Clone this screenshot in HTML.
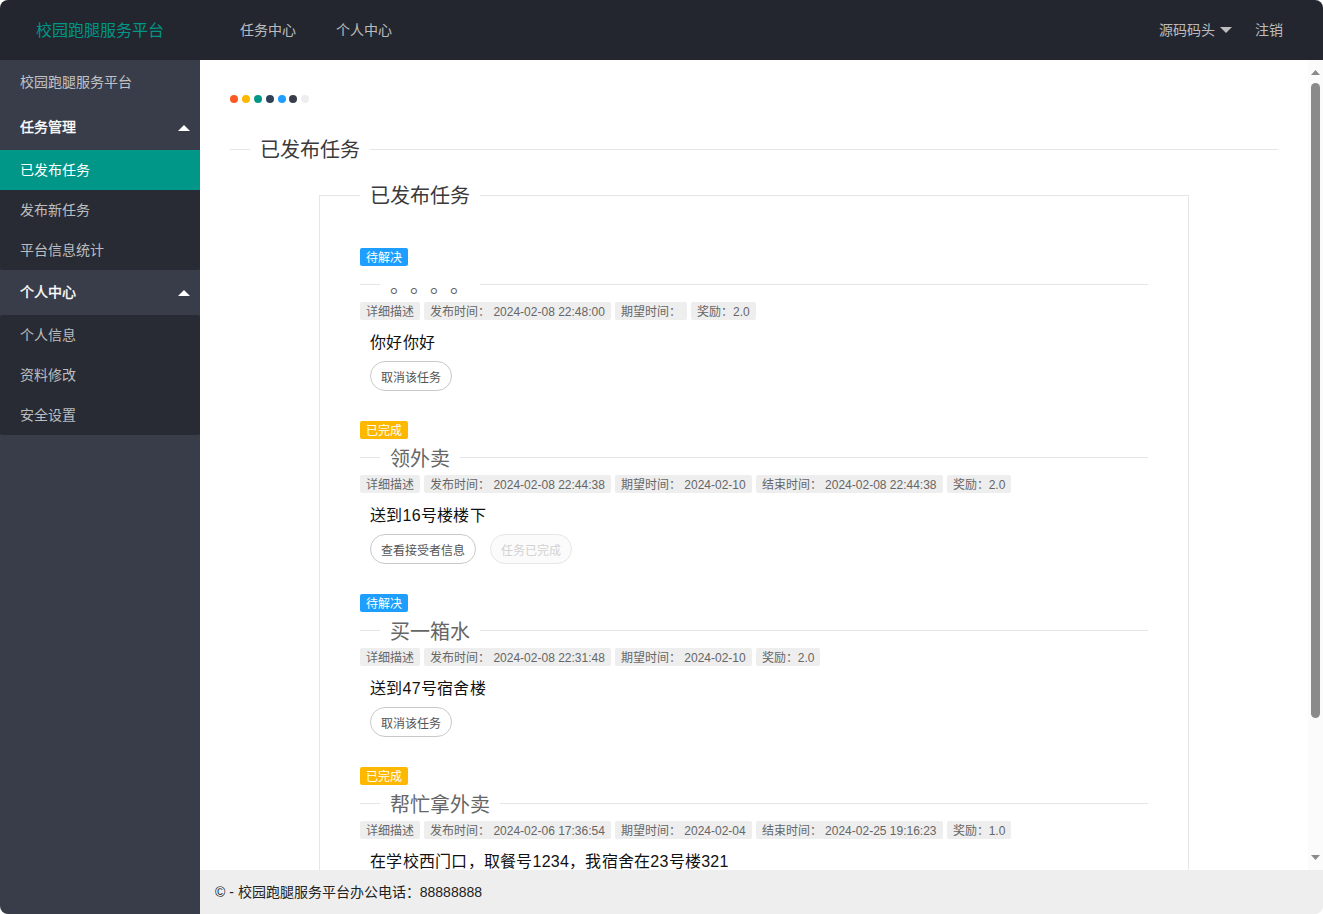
<!DOCTYPE html>
<html lang="zh-CN">
<head>
<meta charset="utf-8">
<title>校园跑腿服务平台</title>
<style>
*{margin:0;padding:0;box-sizing:border-box}
html,body{width:1323px;height:914px;overflow:hidden;background:#fff}
body{text-spacing-trim:space-all;font-family:"Liberation Sans",sans-serif;font-size:14px;color:#333;line-height:24px}
#win{position:absolute;left:0;top:0;width:1323px;height:914px;border-radius:8px;overflow:hidden;background:#fff}
.hdr{position:absolute;left:0;top:0;width:1323px;height:60px;background:#23262E}
.logo{position:absolute;left:0;top:1px;width:200px;height:60px;line-height:60px;text-align:center;color:#009688;font-size:16px}
.hnav{position:absolute;top:0;height:60px;line-height:60px;color:rgba(255,255,255,.7);font-size:14px;white-space:nowrap}
.hnav span{position:absolute;top:0}
.tri-d{position:absolute;width:0;height:0;border-style:solid;border-width:6px 6px 0 6px;border-color:rgba(255,255,255,.7) transparent transparent transparent}
.tri-u{position:absolute;width:0;height:0;border-style:solid;border-width:0 6px 6px 6px;border-color:transparent transparent #fff transparent}
.side{position:absolute;left:0;top:60px;width:200px;height:854px;background:#393D49}
.sitem{position:absolute;left:0;width:200px;height:45px;line-height:45px;padding-left:20px;color:rgba(255,255,255,.7)}
.sitem.w{color:#fff;-webkit-text-stroke:.35px #fff}
.child{position:absolute;left:0;width:200px;background:#282B33;border-radius:2px}
.dd{position:absolute;left:0;width:200px;height:40px;line-height:40px;padding-left:20px;color:rgba(255,255,255,.7)}
.dd.on{background:#009688;color:#fff}
.body{position:absolute;left:200px;top:60px;width:1123px;height:810px;background:#fff;overflow:hidden}
.foot{position:absolute;left:200px;top:870px;width:1123px;height:44px;line-height:44px;background:#eee;padding-left:15px;color:#222;font-size:14px}
.sb{position:absolute;left:1108px;top:0;width:15px;height:810px;background:#fbfbfb}
.sbu{position:absolute;left:3px;top:10px;display:block}
.sbd{position:absolute;left:3px;top:795px;display:block}
.sbt{position:absolute;left:3px;top:23px;width:9px;height:635px;border-radius:4.5px;background:#8a8a8a}
.t1{position:relative;top:1px}
.hy{letter-spacing:1.5px}
.dot{position:absolute;width:8px;height:8px;border-radius:50%}
.hl{position:absolute;height:1px;background:#e6e6e6}
.vl{position:absolute;width:1px;background:#e6e6e6}
.leg{position:absolute;font-size:20px;font-weight:300;color:#3a3a3a;white-space:nowrap;line-height:24px}
.leg2{color:#666}
.badge{position:absolute;height:18px;line-height:18px;padding:0 6px;font-size:12px;color:#fff;border-radius:2px;white-space:nowrap}
.blue{background:#1E9FFF}
.orange{background:#FFB800}
.tags{position:absolute;left:160px;height:18px;white-space:nowrap;font-size:0}
.tag{display:inline-block;vertical-align:top;height:18px;line-height:18px;padding:0 6px;font-size:12px;color:#666;background:#eee;border-radius:2px;margin-right:4.1px}
.desc{position:absolute;left:170px;font-size:16px;color:#111;letter-spacing:.25px;white-space:nowrap;line-height:24px}
.btn{position:absolute;height:30px;line-height:30px;padding:0 10px;font-size:12px;color:#555;border:1px solid #C9C9C9;border-radius:100px;background:#fff;white-space:nowrap}
.btn.dis{color:#d2d2d2;border-color:#e6e6e6;background:#FBFBFB}
</style>
</head>
<body>
<div id="win">
  <div class="hdr">
    <div class="logo">校园跑腿服务平台</div>
    <div class="hnav"><span style="left:240px">任务中心</span><span style="left:336px">个人中心</span></div>
    <div class="hnav"><span style="left:1159px">源码码头</span><span style="left:1255px">注销</span></div>
    <div class="tri-d" style="left:1220px;top:27px"></div>
  </div>
  <div class="side">
    <div class="sitem" style="top:0">校园跑腿服务平台</div>
    <div class="sitem w" style="top:45px">任务管理</div>
    <div class="tri-u" style="left:178px;top:64.5px"></div>
    <div class="child" style="top:90px;height:120px">
      <div class="dd on" style="top:0">已发布任务</div>
      <div class="dd" style="top:40px">发布新任务</div>
      <div class="dd" style="top:80px">平台信息统计</div>
    </div>
    <div class="sitem w" style="top:210px">个人中心</div>
    <div class="tri-u" style="left:178px;top:229.5px"></div>
    <div class="child" style="top:255px;height:120px">
      <div class="dd" style="top:0">个人信息</div>
      <div class="dd" style="top:40px">资料修改</div>
      <div class="dd" style="top:80px">安全设置</div>
    </div>
  </div>
  <div class="body" id="bd">
    <!-- dots -->
    <div class="dot" style="left:30px;top:34.7px;background:#FF5722"></div>
    <div class="dot" style="left:42px;top:34.7px;background:#FFB800"></div>
    <div class="dot" style="left:54px;top:34.7px;background:#009688"></div>
    <div class="dot" style="left:66px;top:34.7px;background:#2F4056"></div>
    <div class="dot" style="left:78px;top:34.7px;background:#1E9FFF"></div>
    <div class="dot" style="left:89px;top:34.7px;background:#393D49"></div>
    <div class="dot" style="left:101px;top:34.7px;background:#eee"></div>
    <!-- top title -->
    <div class="hl" style="left:30px;top:89px;width:20px"></div>
    <div class="hl" style="left:170px;top:89px;width:908px"></div>
    <div class="leg" style="left:60px;top:78px">已发布任务</div>
    <!-- inner fieldset -->
    <div class="hl" style="left:119px;top:135px;width:41px"></div>
    <div class="hl" style="left:280px;top:135px;width:709px"></div>
    <div class="vl" style="left:119px;top:135px;height:700px"></div>
    <div class="vl" style="left:988px;top:135px;height:700px"></div>
    <div class="leg" style="left:170px;top:124px">已发布任务</div>
    <div class="badge blue" style="left:160px;top:188px"><span class="t1">待解决</span></div>
    <div class="hl" style="left:160px;top:224px;width:20px"></div>
    <div class="hl" style="left:280px;top:224px;width:668px"></div>
    <div class="leg leg2" style="left:190px;top:214px">。。。。</div>
    <div class="tags" style="top:242px"><span class="tag"><span class="t1">详细描述</span></span><span class="tag"><span class="t1">发布时间：&nbsp;2024-02-08 22:48:00</span></span><span class="tag"><span class="t1">期望时间：</span></span><span class="tag"><span class="t1">奖励：2.0</span></span></div>
    <div class="desc" style="top:271px">你好你好</div>
    <div class="btn" style="left:170px;top:301px"><span class="t1">取消该任务</span></div>
    <div class="badge orange" style="left:160px;top:361px"><span class="t1">已完成</span></div>
    <div class="hl" style="left:160px;top:397px;width:20px"></div>
    <div class="hl" style="left:260px;top:397px;width:688px"></div>
    <div class="leg leg2" style="left:190px;top:387px">领外卖</div>
    <div class="tags" style="top:415px"><span class="tag"><span class="t1">详细描述</span></span><span class="tag"><span class="t1">发布时间：&nbsp;2024-02-08 22:44:38</span></span><span class="tag"><span class="t1">期望时间：&nbsp;2024-02-10</span></span><span class="tag"><span class="t1">结束时间：&nbsp;2024-02-08 22:44:38</span></span><span class="tag"><span class="t1">奖励：2.0</span></span></div>
    <div class="desc" style="top:444px">送到16号楼楼下</div>
    <div class="btn" style="left:170px;top:474px"><span class="t1">查看接受者信息</span></div>
    <div class="btn dis" style="left:290px;top:474px"><span class="t1">任务已完成</span></div>
    <div class="badge blue" style="left:160px;top:534px"><span class="t1">待解决</span></div>
    <div class="hl" style="left:160px;top:570px;width:20px"></div>
    <div class="hl" style="left:280px;top:570px;width:668px"></div>
    <div class="leg leg2" style="left:190px;top:560px">买一箱水</div>
    <div class="tags" style="top:588px"><span class="tag"><span class="t1">详细描述</span></span><span class="tag"><span class="t1">发布时间：&nbsp;2024-02-08 22:31:48</span></span><span class="tag"><span class="t1">期望时间：&nbsp;2024-02-10</span></span><span class="tag"><span class="t1">奖励：2.0</span></span></div>
    <div class="desc" style="top:617px">送到47号宿舍楼</div>
    <div class="btn" style="left:170px;top:647px"><span class="t1">取消该任务</span></div>
    <div class="badge orange" style="left:160px;top:707px"><span class="t1">已完成</span></div>
    <div class="hl" style="left:160px;top:743px;width:20px"></div>
    <div class="hl" style="left:300px;top:743px;width:648px"></div>
    <div class="leg leg2" style="left:190px;top:733px">帮忙拿外卖</div>
    <div class="tags" style="top:761px"><span class="tag"><span class="t1">详细描述</span></span><span class="tag"><span class="t1">发布时间：&nbsp;2024-02-06 17:36:54</span></span><span class="tag"><span class="t1">期望时间：&nbsp;2024-02-04</span></span><span class="tag"><span class="t1">结束时间：&nbsp;2024-02-25 19:16:23</span></span><span class="tag"><span class="t1">奖励：1.0</span></span></div>
    <div class="desc" style="top:790px">在学校西门口，取餐号1234，我宿舍在23号楼321</div>
    <div class="btn" style="left:170px;top:820px"><span class="t1">查看接受者信息</span></div>
    <div class="btn dis" style="left:290px;top:820px"><span class="t1">任务已完成</span></div>
    <div class="sb"><svg class="sbu" width="9" height="5" viewBox="0 0 9 5"><polygon points="0,5 9,5 4.5,0" fill="#8a8a8a"/></svg><div class="sbt"></div><svg class="sbd" width="9" height="5" viewBox="0 0 9 5"><polygon points="0,0 9,0 4.5,5" fill="#8a8a8a"/></svg></div>
  </div>
  <div class="foot">© - 校园跑腿服务平台办公电话：88888888</div>
</div>
</body>
</html>
